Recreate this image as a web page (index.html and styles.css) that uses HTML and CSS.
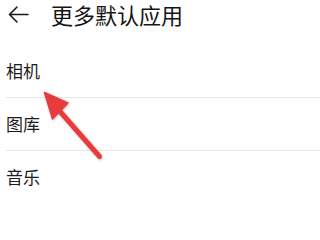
FILE: index.html
```html
<!DOCTYPE html>
<html lang="zh-CN">
<head>
<meta charset="utf-8">
<link rel="stylesheet" href="styles.css">
</head>
<body>
<div class="page">
  <header class="topbar">
    <svg class="back" width="21" height="17" viewBox="0 0 21 17">
      <path d="M20 8.5H1.5M9 1L1.5 8.5L9 16" fill="none" stroke="#1a1a1a" stroke-width="1.6" stroke-linecap="round" stroke-linejoin="round"/>
    </svg>
    <h1 class="title">更多默认应用</h1>
  </header>
  <ul class="list">
    <li class="row">相机</li>
    <li class="row">图库</li>
    <li class="row last">音乐</li>
  </ul>
  <svg class="pointer" width="66" height="74" viewBox="40 88 66 74">
    <defs>
      <filter id="sh" x="-20%" y="-20%" width="140%" height="140%">
        <feDropShadow dx="0.6" dy="0.8" stdDeviation="0.8" flood-color="#000" flood-opacity="0.25"/>
      </filter>
    </defs>
    <g filter="url(#sh)" fill="#e83b3d" stroke="#e83b3d">
      <line x1="57" y1="108" x2="99.5" y2="156.5" stroke-width="5" stroke-linecap="round"/>
      <polygon points="44.5,92.5 68,103 52.5,119" stroke-width="1.5" stroke-linejoin="round"/>
    </g>
  </svg>
</div>
</body>
</html>
```
FILE: styles.css
```css
html, body {
  margin: 0;
  padding: 0;
  background: #ffffff;
}
.page {
  position: relative;
  min-height: 202px;
  overflow: hidden;
  font-family: "Noto Sans CJK SC", "Noto Sans", sans-serif;
}
.topbar {
  display: flex;
  align-items: center;
  height: 28px;
  padding-left: 8px;
}
.back {
  display: block;
  flex: none;
}
.title {
  margin: 0 0 0 22px;
  font-size: 22px;
  font-weight: 400;
  line-height: 1.3;
  color: #141414;
  white-space: nowrap;
}
.list {
  list-style: none;
  margin: 17px 0 0 6px;
  padding: 0;
}
.row {
  height: 52px;
  line-height: 52px;
  font-size: 17px;
  color: #1c1c1c;
  border-bottom: 1px solid #e6e6e6;
}
.row.last {
  border-bottom: none;
}
.pointer {
  position: absolute;
  left: 40px;
  top: 88px;
}
```
